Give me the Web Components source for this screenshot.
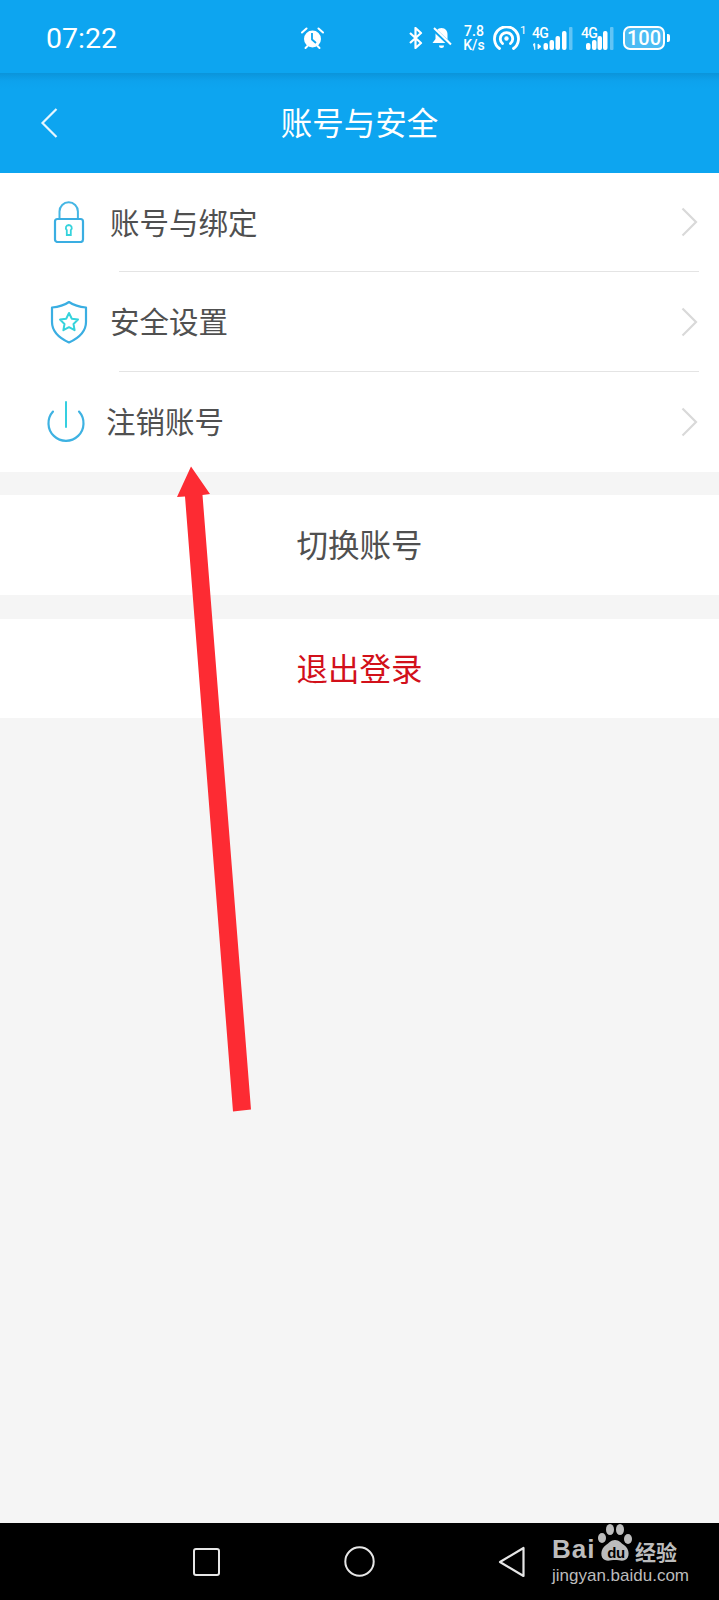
<!DOCTYPE html>
<html lang="zh">
<head>
<meta charset="utf-8">
<title>账号与安全</title>
<style>
  html, body { margin: 0; height: 100%; }
  body {
    width: 719px; height: 1600px; overflow: hidden; position: relative;
    display: flex; flex-direction: column; background: #f5f5f5;
    font-family: "Noto Sans CJK SC", "Noto Sans", sans-serif;
  }
  .spacer { flex: 1; }
  .group { margin-top: 23px; }
  .group + .group { margin-top: 24px; }
</style>
</head>
<body>
  <status-bar></status-bar>
  <nav-header title="账号与安全"></nav-header>

  <menu-row label="账号与绑定" divider style="--label-y: -2px">
    <svg slot="icon" width="32" height="42" viewBox="0 0 32 42" fill="none">
      <path d="M6.500 18V10.500a9.200 9.200 0 0 1 18.400 0V18" stroke="#45b6e4" stroke-width="2"/>
      <rect x="2" y="18" width="28" height="23" rx="2.500" stroke="#3aaee2" stroke-width="2.200"/>
      <path d="M15.800 24a3 3 0 0 1 2 5.200V34h-4v-4.800a3 3 0 0 1 2-5.200z" stroke="#35d3dc" stroke-width="1.800"/>
    </svg>
  </menu-row>
  <menu-row label="安全设置" divider style="--row-h: 99px; --label-y: -4px">
    <svg slot="icon" width="38" height="44" viewBox="0 0 38 44" fill="none">
      <path d="M19 2c5 3.500 10.500 5 17 5.500V22c0 9-6 15.500-17 20.500C8 37.500 2 31 2 22V7.500C8.500 7 14 5.500 19 2z" stroke="#3aaee2" stroke-width="2.200" stroke-linejoin="round"/>
      <path d="M19 13l2.800 5.700 6.200.9-4.500 4.400 1.100 6.200-5.600-3-5.600 3 1.100-6.200-4.500-4.400 6.200-.9z" stroke="#35d3dc" stroke-width="2" stroke-linejoin="round"/>
    </svg>
  </menu-row>
  <menu-row label="注销账号" style="--icon-w: 40px; --text-gap: 20px; --row-h: 100px; --label-y: -4px">
    <svg slot="icon" width="38" height="42" viewBox="0 0 38 42" fill="none">
      <path d="M6 10.600A17.500 17.500 0 1 0 32 10.600" stroke="#3eb2e2" stroke-width="2.200" stroke-linecap="round"/>
      <path d="M19 1v25" stroke="#35cfe0" stroke-width="2" stroke-linecap="round"/>
    </svg>
  </menu-row>

  <action-row class="group" label="切换账号" style="--row-h: 100px"></action-row>
  <action-row class="group" label="退出登录" style="--label-color: #d2101a; --row-h: 99px"></action-row>

  <div class="spacer"></div>
  <nav-bar></nav-bar>
  <red-arrow></red-arrow>

<script>
class StatusBar extends HTMLElement {
  constructor() {
    super();
    this.attachShadow({ mode: 'open' });
    this.shadowRoot.innerHTML = `
      <style>
        :host {
          display: flex; align-items: center; box-sizing: border-box;
          height: 73px; padding: 3px 0 0 46px; background: #0da5f0; color: #fff;
          font-family: Roboto, "Liberation Sans", sans-serif;
        }
        .time { width: 255px; font-size: 28.500px; line-height: 32px; font-weight: 400; margin-top: 1px; }
        .icons { display: flex; align-items: center; }
        svg { display: block; flex: none; }
        .alarm { margin-right: 84px; }
        .speed {
          width: 24px; margin: 0 7px 0 10px; font-size: 14px; line-height: 14px;
          font-weight: 500; text-align: center;
        }
        .speed span { display: block; }
        .battery {
          box-sizing: border-box; width: 42px; height: 24px; margin-left: 9px;
          border: 2px solid #fff; border-radius: 7px; background: rgba(255,255,255,.26);
          font-size: 20px; font-weight: 500; line-height: 20px; text-align: center;
        }
        .nub { width: 3px; height: 8px; margin-left: 2px; background: #fff; border-radius: 0 2px 2px 0; }
        .net { position: relative; height: 24px; flex: none; }
        .net b {
          position: absolute; left: 0; top: 1px; font-size: 14px; line-height: 12px; font-weight: 500;
          letter-spacing: -.8px;
        }
        .one { align-self: flex-start; width: 6px; margin: 0 6px 0 0; font-size: 11.500px; line-height: 12px; }
        .net svg { position: absolute; left: 0; top: 0; }
      </style>
      <span class="time">07:22</span>
      <div class="icons">
        <svg class="alarm" width="23" height="23" viewBox="0 0 23 23">
          <path d="M1 5.500L5.500 1.500M22 5.500L17.500 1.500" stroke="#fff" stroke-width="2" stroke-linecap="round"/>
          <circle cx="11.500" cy="12" r="8.500" fill="#fff"/>
          <path d="M4.500 21l2-2M18.500 21l-2-2" stroke="#fff" stroke-width="2" stroke-linecap="round"/>
          <path d="M11 6v6.500l4 3.500" fill="none" stroke="#0da5f0" stroke-width="1.800"/>
        </svg>
        <svg width="16" height="22" viewBox="0 0 16 22" fill="none" stroke="#fff" stroke-width="2.200" stroke-linejoin="round">
          <path d="M2 6l11 10-5.500 5V1L13 6 2 16"/>
        </svg>
        <svg style="margin-left:7px" width="21" height="22" viewBox="0 0 21 22">
          <path d="M10.500 1c4 0 6 3 6 6.500v4.500l3 4H1.500l3-4V7.500C4.500 4 6.500 1 10.500 1z" fill="#fff"/>
          <path d="M8 18.500h5a2.500 2.500 0 0 1-5 0z" fill="#fff"/>
          <path d="M2 1.500l18 17" stroke="#0da5f0" stroke-width="4"/>
          <path d="M3 1l17 16.500" stroke="#fff" stroke-width="2"/>
        </svg>
        <div class="speed"><span>7.8</span><span>K/s</span></div>
        <svg width="27" height="24" viewBox="0 0 27 24" fill="none" stroke="#fff" stroke-width="2.800" stroke-linecap="round">
          <path d="M6.500 22.500A12 12 0 1 1 20.500 22.500"/>
          <path d="M9.500 17.500a6.200 6.200 0 1 1 8 0"/>
          <circle cx="13.500" cy="12.500" r="1.600" fill="#fff" stroke-width="1.200"/>
        </svg>
        <span class="one">1</span>
        <div class="net" style="width:42px">
          <b>4G</b>
          <svg width="42" height="24" viewBox="0 0 42 24">
            <path d="M1 18.500l1.800-1v6.500M6 18l3 2.500-3 2.500z" fill="#fff" stroke="#fff" stroke-width=".8"/>
            <rect x="11.500" y="17" width="4.500" height="7" rx="2" fill="#fff"/>
            <rect x="17.500" y="14" width="4.500" height="10" rx="2" fill="#fff"/>
            <rect x="23.500" y="10" width="4.500" height="14" rx="2" fill="#fff"/>
            <rect x="30" y="5" width="4.500" height="19" rx="2" fill="#fff"/>
            <rect x="37" y="1" width="3.500" height="23" rx="1" fill="#fff" opacity=".35"/>
          </svg>
        </div>
        <div class="net" style="width:33px;margin-left:7px">
          <b>4G</b>
          <svg width="33" height="24" viewBox="0 0 33 24">
            <rect x="5" y="17" width="4.500" height="7" rx="2" fill="#fff"/>
            <rect x="11" y="14" width="4.500" height="10" rx="2" fill="#fff"/>
            <rect x="16.500" y="10" width="4.500" height="14" rx="2" fill="#fff"/>
            <rect x="22" y="5" width="4.500" height="19" rx="2" fill="#fff"/>
            <rect x="29" y="1" width="3.500" height="23" rx="1" fill="#fff" opacity=".35"/>
          </svg>
        </div>
        <span class="battery">100</span>
        <span class="nub"></span>
      </div>
    `;
  }
}

class NavHeader extends HTMLElement {
  constructor() {
    super();
    this.attachShadow({ mode: 'open' });
    this.shadowRoot.innerHTML = `
      <style>
        :host {
          display: flex; align-items: center; justify-content: center; position: relative;
          height: 100px; color: #fff;
          background: linear-gradient(#0b94da 0, #0da2ed 8px, #0da5f0 16px);
        }
        .title { font-size: 31.500px; line-height: 44px; margin-top: -5px; }
        svg { position: absolute; left: 40px; top: 34px; }
      </style>
      <svg width="18" height="32" viewBox="0 0 18 32" fill="none">
        <path d="M16.500 2L2.500 16l14 14" stroke="#e6f6ff" stroke-width="2.200"/>
      </svg>
      <span class="title"></span>
    `;
    this.shadowRoot.querySelector('.title').textContent = this.getAttribute('title');
  }
}

class MenuRow extends HTMLElement {
  constructor() {
    super();
    this.attachShadow({ mode: 'open' });
    this.shadowRoot.innerHTML = `
      <style>
        :host { display: block; background: #fff; color: #505050; }
        .row {
          display: flex; align-items: center; box-sizing: border-box;
          height: var(--row-h, 98px); padding: 0 21px 0 46px;
        }
        .icon {
          width: var(--icon-w, 46px); display: flex; justify-content: center; flex: none;
        }
        .label {
          flex: 1; margin-left: var(--text-gap, 18px); margin-top: var(--label-y, 0px);
          font-size: 29.500px; line-height: 42px;
        }
        .line { height: 1px; margin: 0 20px 0 119px; background: #e4e4e4; }
        .line[hidden] { display: none; }
      </style>
      <div class="row">
        <div class="icon"><slot name="icon"></slot></div>
        <span class="label"></span>
        <svg width="17" height="30" viewBox="0 0 17 30" fill="none">
          <path d="M1.500 1.500L15 15 1.500 28.500" stroke="#d9d9d9" stroke-width="2.200"/>
        </svg>
      </div>
      <div class="line"></div>
    `;
    this.shadowRoot.querySelector('.label').textContent = this.getAttribute('label');
    this.shadowRoot.querySelector('.line').hidden = !this.hasAttribute('divider');
  }
}

class ActionRow extends HTMLElement {
  constructor() {
    super();
    this.attachShadow({ mode: 'open' });
    this.shadowRoot.innerHTML = `
      <style>
        :host {
          display: flex; align-items: center; justify-content: center;
          height: var(--row-h, 100px); background: #fff; color: var(--label-color, #505050);
          font-size: 31.500px;
        }
        span { margin-top: -4px; }
      </style>
      <span></span>
    `;
    this.shadowRoot.querySelector('span').textContent = this.getAttribute('label');
  }
}

class NavBar extends HTMLElement {
  constructor() {
    super();
    this.attachShadow({ mode: 'open' });
    this.shadowRoot.innerHTML = `
      <style>
        :host {
          display: flex; align-items: center; position: relative; box-sizing: border-box;
          height: 77px; padding: 0 0 0 193px; gap: 124px; background: #000;
        }
        .mark { position: absolute; left: 552px; top: 0; width: 130px; height: 77px; color: #bcbcbc; }
        .bai {
          position: absolute; left: 0; top: 10px; font: 700 26px/32px "Liberation Sans", sans-serif;
          letter-spacing: 1px;
        }
        .paw { position: absolute; left: 44px; top: 0; }
        .du {
          position: absolute; left: 55px; top: 22px; width: 18px; text-align: center; color: #000;
          font: 700 15px/16px "Liberation Sans", sans-serif; letter-spacing: -.5px;
        }
        .cn {
          position: absolute; left: 83px; top: 15px;
          font: 700 21px/26px "Noto Sans CJK SC", sans-serif;
        }
        .url {
          position: absolute; left: 0; top: 43px; font: 17px/20px "Liberation Sans", sans-serif;
        }
      </style>
      <svg width="27" height="28" viewBox="0 0 27 28" fill="none">
        <rect x="1" y="1" width="25" height="26" rx="2" stroke="#e6e6e6" stroke-width="2"/>
      </svg>
      <svg width="31" height="31" viewBox="0 0 31 31" fill="none">
        <circle cx="15.500" cy="15.500" r="14.200" stroke="#e6e6e6" stroke-width="2"/>
      </svg>
      <svg width="27" height="32" viewBox="0 0 27 32" fill="none" style="margin-left:-1px">
        <path d="M25.500 2v28L2 16z" stroke="#e6e6e6" stroke-width="2.200" stroke-linejoin="round"/>
      </svg>
      <div class="mark">
        <span class="bai">Bai</span>
        <svg class="paw" width="38" height="40" viewBox="0 0 38 40" fill="#bcbcbc">
          <ellipse cx="6" cy="15" rx="4" ry="5"/>
          <ellipse cx="14" cy="6.500" rx="4" ry="5.500"/>
          <ellipse cx="24" cy="6.500" rx="4" ry="5.500"/>
          <ellipse cx="32" cy="16" rx="4" ry="5"/>
          <path d="M19 17c4 0 6 3 9 5 6 4 6 13 1 15-3 1.500-6 0-10 0s-7 1.500-10 0c-5-2-5-11 1-15 3-2 5-5 9-5z"/>
        </svg>
        <span class="du">du</span>
        <span class="cn">经验</span>
        <span class="url">jingyan.baidu.com</span>
      </div>
    `;
  }
}

class RedArrow extends HTMLElement {
  constructor() {
    super();
    this.attachShadow({ mode: 'open' });
    this.shadowRoot.innerHTML = `
      <style>
        :host { position: absolute; left: 0; top: 0; width: 719px; height: 1600px; pointer-events: none; }
        svg { display: block; }
      </style>
      <svg width="719" height="1600" viewBox="0 0 719 1600">
        <path d="M191 466.500L210 494 202.500 495 251 1109.500 233 1111.500 185 496.500 177 497z" fill="#fd2b33"/>
      </svg>
    `;
  }
}

customElements.define('status-bar', StatusBar);
customElements.define('nav-header', NavHeader);
customElements.define('menu-row', MenuRow);
customElements.define('action-row', ActionRow);
customElements.define('nav-bar', NavBar);
customElements.define('red-arrow', RedArrow);
</script>
</body>
</html>
